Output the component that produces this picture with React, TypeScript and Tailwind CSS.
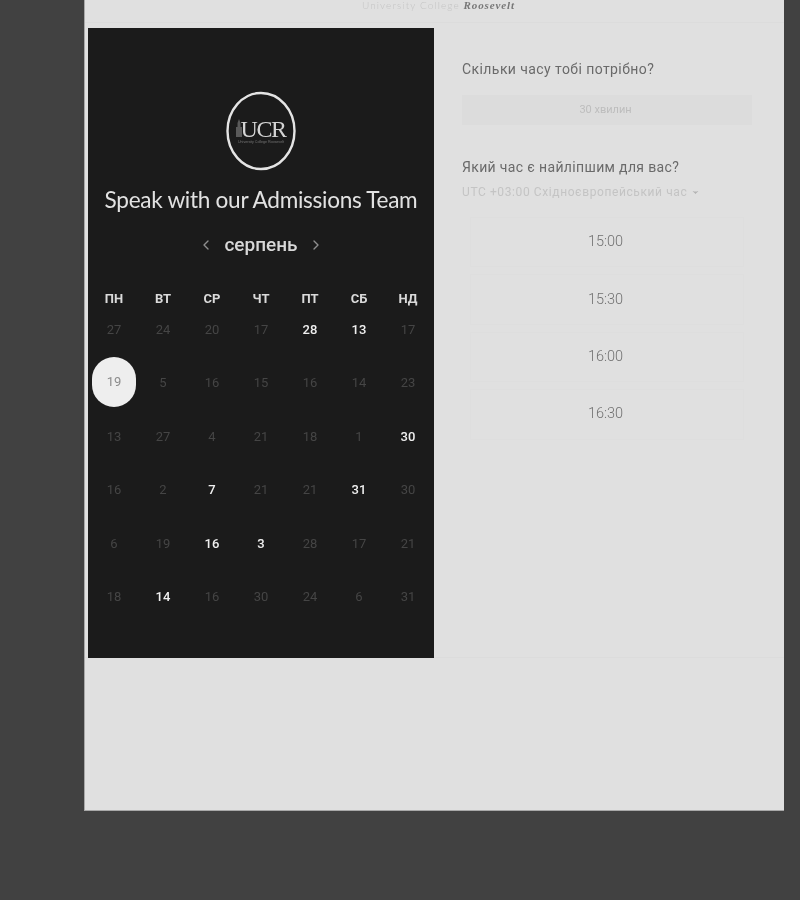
import React from 'react';
import { ChevronDown, ChevronLeft, ChevronRight } from 'lucide-react';

const weekDays = ['ПН', 'ВТ', 'СР', 'ЧТ', 'ПТ', 'СБ', 'НД'];

// [day, available]
const days: [number, boolean][] = [
  [27, false], [24, false], [20, false], [17, false], [28, true], [13, true], [17, false],
  [19, false], [5, false], [16, false], [15, false], [16, false], [14, false], [23, false],
  [13, false], [27, false], [4, false], [21, false], [18, false], [1, false], [30, true],
  [16, false], [2, false], [7, true], [21, false], [21, false], [31, true], [30, false],
  [6, false], [19, false], [16, true], [3, true], [28, false], [17, false], [21, false],
  [18, false], [14, true], [16, false], [30, false], [24, false], [6, false], [31, false],
];

const slots = ['15:00', '15:30', '16:00', '16:30'];

const Logo = () => (
  <svg width="70" height="80" viewBox="0 0 70 80" className="mx-auto">
    <ellipse cx="35" cy="40" rx="33.5" ry="38" fill="none" stroke="#e4e4e4" strokeWidth="2.4" />
    <path d="M10 46V36h1.5v-4l1.5-4 1.5 4v4H16v10z" fill="#5a5a5a" />
    <text x="37" y="46" textAnchor="middle" fill="#d4d4d4" fontSize="24" fontFamily="Liberation Serif, serif" letterSpacing="-1.5">UCR</text>
    <text x="35" y="52" textAnchor="middle" fill="#777777" fontSize="3.6" fontFamily="Liberation Sans, sans-serif">University College Roosevelt</text>
  </svg>
);

export default function App() {
  return (
    <div className="h-[900px] bg-[#414141] font-['Roboto',sans-serif] overflow-hidden blur-[0.4px]">
      <div className="ml-[84px] w-[700px] h-[811px] bg-[#e0e0e0] border-l border-b border-[#a8a8a8] flex flex-col">
        <div className="h-[24px] border-b border-[#dcdcdc] flex justify-center pl-[8px] -mt-[1px]">
          <p className="text-[10px] leading-[13px] whitespace-nowrap">
            <span className="text-[#c4c4c4] tracking-[1.1px] font-['Lato',sans-serif] font-light">University College </span>
            <span className="text-[#777] font-['Liberation_Serif',serif] font-bold italic text-[11px] tracking-[0.9px]">Roosevelt</span>
          </p>
        </div>

        <div className="flex mt-[5px] pl-[3px] border-b border-[#dcdcdc] h-[630px]">
          <div className="w-[346px] h-[630px] bg-[#1b1b1b] pt-[63px] shrink-0">
            <Logo />
            <h1 className="mt-[11px] text-center text-[#e2e2e2] font-['Lato',sans-serif] text-[22.6px] leading-[36px] tracking-[-0.3px] whitespace-nowrap">
              Speak with our Admissions Team
            </h1>
            <div className="mt-[9px] h-[36px] flex items-center justify-center gap-[10px]">
              <ChevronLeft className="w-4 h-4 text-[#8f8f8f]" />
              <span className="text-[19px] font-medium text-[#d8d8d8] w-[74px] text-center whitespace-nowrap">серпень</span>
              <ChevronRight className="w-4 h-4 text-[#8f8f8f]" />
            </div>

            <div className="mt-[26px] w-[343px] mx-auto grid grid-cols-7 h-[20px]">
              {weekDays.map((d) => (
                <div key={d} className="flex items-center justify-center text-[13px] font-bold text-[#dadada]">{d}</div>
              ))}
            </div>
            <div className="-mt-[6px] w-[343px] mx-auto grid grid-cols-7 auto-rows-[53.4px]">
              {days.map(([day, available], i) => (
                <div key={i} className="flex items-center justify-center">
                  {i === 7 ? (
                    <span className="w-[44px] h-[50px] -mt-[2px] rounded-full bg-[#eeeeee] text-[#8c8c8c] text-[13px] flex items-center justify-center">{day}</span>
                  ) : (
                    <span className={available ? 'text-[13px] font-medium text-[#f0f0f0]' : 'text-[13px] text-[#454545]'}>{day}</span>
                  )}
                </div>
              ))}
            </div>
          </div>

          <div className="ml-[28px] w-[290px]">
            <h2 className="mt-[31px] text-[14px] leading-[20px] font-normal text-[#6a6a6a] tracking-[0.42px] whitespace-nowrap">Скільки часу тобі потрібно?</h2>
            <div className="mt-[16px] h-[30px] bg-[#dcdcdc] flex items-center justify-center pr-[3px] text-[11px] text-[#bdbdbd]">30 хвилин</div>
            <h2 className="mt-[32px] text-[14px] leading-[20px] font-normal text-[#6a6a6a] tracking-[0.35px] whitespace-nowrap">Який час є найліпшим для вас?</h2>
            <div className="mt-[5px] flex items-center gap-[4px] h-[20px] text-[12px] tracking-[0.6px] text-[#c4c4c4] whitespace-nowrap">
              UTC +03:00 Східноєвропейський час
              <ChevronDown className="w-[9px] h-[9px] text-[#b4b4b4] fill-[#b4b4b4]" />
            </div>
            <div className="mt-[15px] ml-[8px] w-[274px] flex flex-col gap-[7px]">
              {slots.map((s) => (
                <div key={s} className="h-[50.4px] border border-[#dedede] flex items-center justify-center pr-[3px] text-[14.5px] font-light text-[#707070]">{s}</div>
              ))}
            </div>
          </div>
        </div>
      </div>
    </div>
  );
}
